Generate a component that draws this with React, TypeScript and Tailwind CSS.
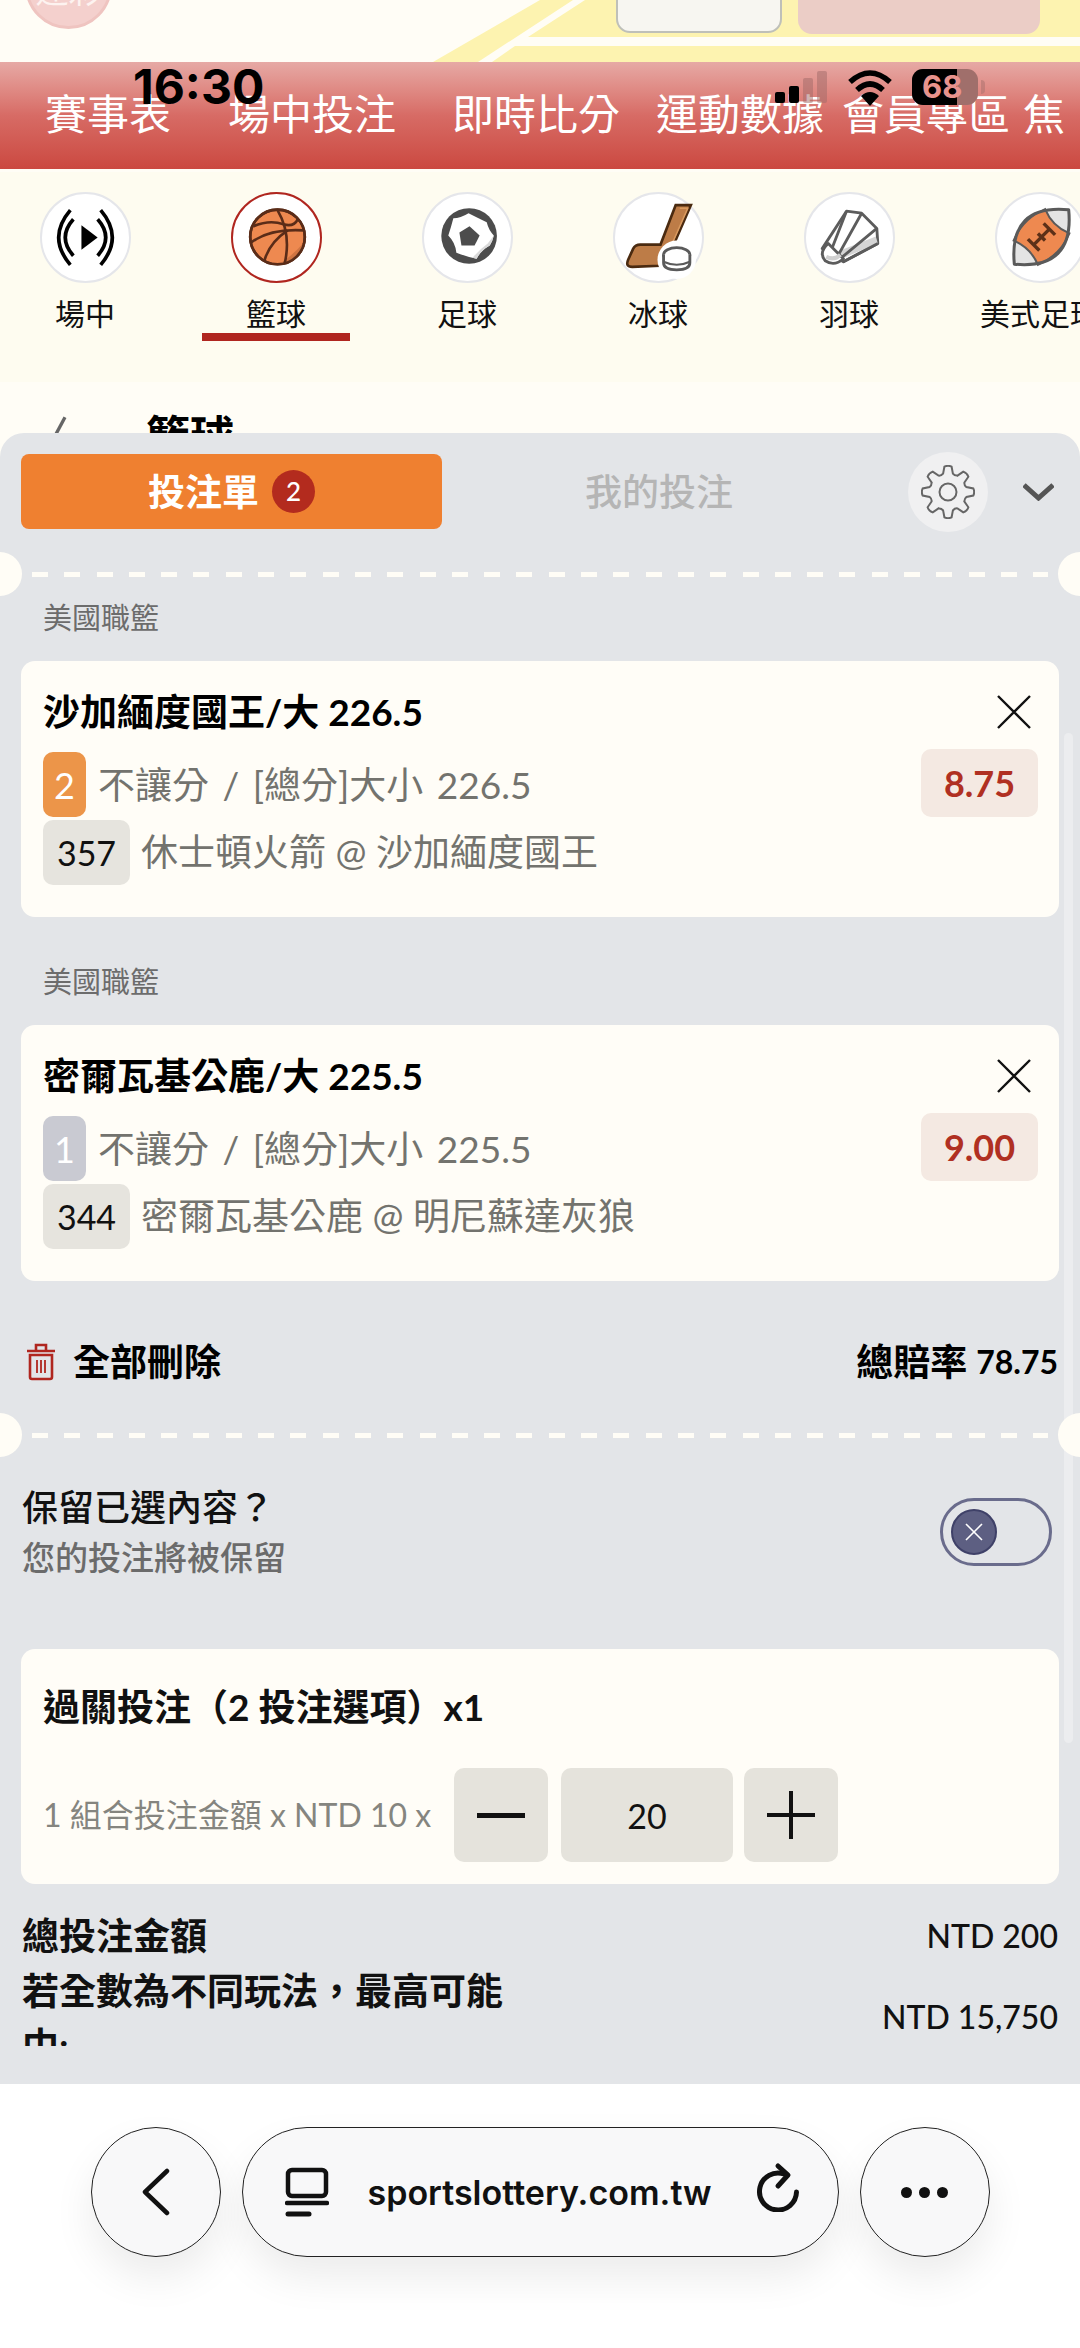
const FONT = "font-['Lato','Noto_Sans_CJK_TC',sans-serif]"

const navItems = [
    { label: "賽事表", width: "w-[183px]" },
    { label: "場中投注", width: "w-[224px]" },
    { label: "即時比分", width: "w-[204px]" },
    { label: "運動數據", width: "w-[186px]" },
    { label: "會員專區", width: "w-[181px]" },
    { label: "焦", width: "w-[57px]" },
]

// 8 tooth gear outline for the settings button
const gearPath = Array.from({ length: 8 }, (_, i) => {
    const a = (i * Math.PI) / 4 - Math.PI / 2
    const pt = (r: number, off: number) => `${(27 + r * Math.cos(a + off)).toFixed(1)} ${(27 + r * Math.sin(a + off)).toFixed(1)}`
    return `${i === 0 ? "M" : "L"}${pt(19, -0.26)} L${pt(25.5, -0.14)} Q${pt(27, 0)} ${pt(25.5, 0.14)} L${pt(19, 0.26)} Q${pt(17.5, 0.39)} ${pt(19, 0.52)}`
}).join(" ") + " Z"

const LiveIcon = () => (
    <svg viewBox="2 2 86 86" className="size-[87px]" fill="none" stroke="#000" strokeWidth="3.6">
        <path d="M41 33 L41 57 L57 45 Z" fill="#000" stroke="none" />
        <path d="M33 27 Q17 45 33 63" />
        <path d="M57 27 Q73 45 57 63" />
        <path d="M30 18 Q7 45 30 72" />
        <path d="M60 18 Q83 45 60 72" />
    </svg>
)

const BasketballIcon = () => (
    <svg viewBox="2 2 86 86" className="size-[87px]" fill="none" stroke="#5a2c18" strokeWidth="2.6">
        <circle cx="46" cy="44.5" r="27" fill="#ee8950" />
        <path d="M60 68 A27 27 0 0 0 72 50 Q62 62 48 71 Z" fill="#cf7442" stroke="none" />
        <circle cx="46" cy="44.5" r="27" />
        <path d="M22 34 Q38 27 52 32 Q62 35 66 27" />
        <path d="M20 50 Q38 36 72 38" />
        <path d="M46 18 Q60 42 53 71" />
        <path d="M33 68 Q38 50 56 38" />
    </svg>
)

const SoccerIcon = () => (
    <svg viewBox="2 2 86 86" className="size-[87px]">
        <circle cx="46.6" cy="43.5" r="27.5" fill="#4c4c4c" />
        <path d="M31 26 Q38 26 46 21 Q56 26 64 30 Q66 38 71 43 Q70 48 67 53 Q58 58 54 66 Q44 64 34 60 Q33 50 26 43 Q29 34 31 26 Z" fill="#fff" />
        <path d="M71 43 Q70 48 67 53 Q58 58 54 66 L50 65 Q58 56 65 51 Z" fill="#d9d9d9" />
        <path d="M47 34 L57 43 L52 53 L39 53 L37 40 Z" fill="#4c4c4c" />
    </svg>
)

const HockeyIcon = () => (
    <svg viewBox="2 2 86 86" className="size-[87px]">
        <path d="M62 13 L77 13 L60 52 L46 73 L19 74 Q12 74 15 67 L20 56 Q22 52 27 52 L47 52 Z" fill="#bd7c47" stroke="#4a2a10" strokeWidth="2.6" />
        <path d="M66 16 L74 16 L59 50" fill="none" stroke="#d99a5f" strokeWidth="1.5" />
        <circle cx="63" cy="67" r="19" fill="#fff" />
        <ellipse cx="63" cy="62" rx="13" ry="7" fill="#fff" stroke="#5a5a5a" strokeWidth="2.8" />
        <path d="M50 62 L50 70 Q50 77 63 77 Q76 77 76 70 L76 62" fill="#fff" stroke="#5a5a5a" strokeWidth="2.8" />
        <path d="M50 69 Q63 75 76 69" fill="none" stroke="#5a5a5a" strokeWidth="2" />
    </svg>
)

const ShuttleIcon = () => (
    <svg viewBox="2 2 86 86" className="size-[87px]" fill="none" stroke="#5c5c5c" strokeWidth="2.8" strokeLinejoin="round">
        <path d="M42 19 L57 21 L72 36 L73 51 L39 69 L18 56 Z" fill="#fff" />
        <path d="M37 66 L73 51 L71 44 L30 60 Z" fill="#d5d5d5" stroke="none" />
        <path d="M42 19 L26 60 M57 21 L33 64 M72 36 L37 65 M73 51 L39 69" />
        <path d="M24 51 Q14 60 21 68 Q30 74 39 66 Z" fill="#fff" />
        <path d="M22 64 Q30 68 36 62" stroke="#d0d0d0" strokeWidth="4" />
    </svg>
)

const FootballIcon = () => (
    <svg viewBox="2 2 86 86" className="size-[87px]">
        <g transform="translate(46 44.5) rotate(-45)">
            <path d="M-38 0 Q0 -46 38 0 Q0 46 -38 0 Z" fill="#e4e4e4" />
            <path d="M-22 -17 Q-15 0 -22 17 Q0 26 22 17 Q15 0 22 -17 Q0 -26 -22 -17 Z" fill="#ee8950" stroke="#5a5a5a" strokeWidth="2" />
            <path d="M-38 0 Q0 -46 38 0 Q0 46 -38 0 Z" fill="none" stroke="#5a5a5a" strokeWidth="3" strokeLinejoin="round" />
            <path d="M-11 0 L11 0 M-11 -8 L-11 8 M11 -8 L11 8 M0 -5 L0 5" fill="none" stroke="#5c3018" strokeWidth="3.4" />
        </g>
    </svg>
)

const sports = [
    { label: "場中", icon: <LiveIcon /> },
    { label: "籃球", icon: <BasketballIcon />, active: true },
    { label: "足球", icon: <SoccerIcon /> },
    { label: "冰球", icon: <HockeyIcon /> },
    { label: "羽球", icon: <ShuttleIcon /> },
    { label: "美式足球", icon: <FootballIcon /> },
]

const bets = [
    { title: "沙加緬度國王/大 226.5", no: "2", noColor: "bg-[#ec9549]", market: "不讓分 / [總分]大小 226.5", odds: "8.75", code: "357", game: "休士頓火箭 @ 沙加緬度國王" },
    { title: "密爾瓦基公鹿/大 225.5", no: "1", noColor: "bg-[#c9cad2]", market: "不讓分 / [總分]大小 225.5", odds: "9.00", code: "344", game: "密爾瓦基公鹿 @ 明尼蘇達灰狼" },
]

const Divider = () => (
    <div className="relative h-[44px]">
        <div className="absolute left-[-22px] top-0 size-[44px] rounded-full bg-[#fffdf6]" />
        <div className="absolute right-[-22px] top-0 size-[44px] rounded-full bg-[#fffdf6]" />
        <div className="absolute left-[32px] right-[32px] top-[20px] h-[5px] bg-[repeating-linear-gradient(90deg,#fffdf6_0,#fffdf6_16px,transparent_16px,transparent_32.3px)]" />
    </div>
)

const BetCard = ({ bet }: { bet: (typeof bets)[number] }) => (
    <div>
        <div className="ml-[43px] flex h-[42px] items-center text-[29px] text-[#6c6c6c]">美國職籃</div>
        <div className="mx-[21px] mt-[22px] h-[256px] rounded-[14px] bg-[#fffdf7] pl-[22px] pr-[21px] pt-[30px]">
            <div className="flex h-[42px] items-center justify-between">
                <span className="-mt-[2px] text-[37px] leading-none font-bold text-black">{bet.title}</span>
                <svg viewBox="0 0 34 34" className="mr-[7px] size-[34px]" fill="none" stroke="#111" strokeWidth="2.4">
                    <path d="M1 1 L33 33 M33 1 L1 33" />
                </svg>
            </div>
            <div className="mt-[16px] flex h-[68px] items-end">
                <span className={`flex h-[65px] w-[43px] items-center justify-center rounded-[10px] text-[36px] text-white ${bet.noColor}`}>{bet.no}</span>
                <span className="ml-[12px] h-[65px] flex-1 text-[37px] leading-[65px] [word-spacing:4px] whitespace-nowrap text-[#73736e]">{bet.market}</span>
                <span className="flex h-[68px] w-[117px] items-center justify-center rounded-[10px] bg-[#f4e9e2] text-[36px] font-bold text-[#b03022]">{bet.odds}</span>
            </div>
            <div className="mt-[3px] flex h-[65px] items-center">
                <span className="flex h-[65px] w-[87px] items-center justify-center rounded-[10px] bg-[#e6e4de] text-[34px] text-[#111]">{bet.code}</span>
                <span className="ml-[11px] -mt-[2px] text-[37px] whitespace-nowrap text-[#73736e]">{bet.game}</span>
            </div>
        </div>
    </div>
)

export default function App() {
    return (
        <div className={`relative h-[2348px] w-[1080px] overflow-hidden bg-[#fffdf6] ${FONT}`}>
            <div className="relative h-[62px] overflow-hidden bg-[#fffdf6]">
                <svg viewBox="0 0 1080 62" className="h-[62px] w-[1080px]" fill="#fdf3b0">
                    <path d="M433 62 L540 0 L573 0 L478 62 Z" />
                    <path d="M492 62 L515 46 L1080 46 L1080 62 Z" />
                    <path d="M528 37 L585 0 L1080 0 L1080 37 Z" />
                </svg>
                <div className="absolute left-[25px] top-[-58px] size-[87px] rounded-full border-[3px] border-[#efc4c0] bg-[#f4d0cd]">
                    <div className="mt-[29px] text-center text-[33px] leading-none whitespace-nowrap text-[#fdf3f0]">運彩</div>
                </div>
                <div className="absolute left-[616px] top-[-20px] h-[53px] w-[166px] rounded-[14px] border-[2px] border-[#bfc0b9] bg-[#f7f6f1]" />
                <div className="absolute left-[798px] top-[-20px] h-[54px] w-[242px] rounded-[14px] bg-[#ebcdc6]" />
            </div>

            <nav className="flex h-[107px] items-center overflow-hidden bg-gradient-to-b from-[#e6a9a5] via-[#d76b65] to-[#cb4840] pb-[3px] pl-[45px] whitespace-nowrap text-[42px] leading-none text-white">
                {navItems.map(item => (
                    <span key={item.label} className={`shrink-0 ${item.width}`}>{item.label}</span>
                ))}
            </nav>

            <div className="h-[3px] bg-[#fffdf6]" />

            <div className="flex h-[210px] gap-[43px] overflow-hidden bg-[#fefcf0] pl-[11px] pt-[20px]">
                {sports.map(sport => (
                    <div key={sport.label} className="flex w-[148px] shrink-0 flex-col items-center">
                        <div className={`flex size-[91px] items-center justify-center rounded-full bg-white border-[2px] ${sport.active ? "border-[#b0261f]" : "border-[#e5e6ea]"}`}>
                            {sport.icon}
                        </div>
                        <span className="mt-[10px] h-[40px] text-[30px] leading-[40px] whitespace-nowrap text-[#111]">{sport.label}</span>
                        {sport.active && <div className="h-[8px] w-[148px] bg-[#b0261f]" />}
                    </div>
                ))}
            </div>

            <div className="flex h-[51px] items-start overflow-hidden pl-[50px] pt-[32px]">
                <svg viewBox="0 0 24 60" className="h-[50px] w-[20px]" fill="none" stroke="#666" strokeWidth="4">
                    <path d="M18 4 L4 30" />
                </svg>
                <span className="ml-[76px] text-[44px] leading-none font-bold text-black">籃球</span>
            </div>

            <section className="relative h-[1651px] overflow-hidden rounded-t-[24px] bg-[#e3e5e8]">
                <div className="absolute right-[7px] top-[300px] h-[1010px] w-[9px] rounded-full bg-[#ecedef]" />

                <div className="flex h-[119px] items-start pt-[21px]">
                    <div className="ml-[21px] flex h-[75px] w-[421px] shrink-0 items-center justify-center gap-[13px] rounded-[8px] bg-[#ef8030] text-[37px] font-bold text-white">
                        投注單
                        <span className="flex size-[43px] items-center justify-center rounded-full bg-[#b32b1e] text-[26px] font-medium">2</span>
                    </div>
                    <div className="ml-[143px] flex h-[75px] w-[323px] shrink-0 items-center text-[37px] font-medium whitespace-nowrap text-[#b5b5b5]">我的投注</div>
                    <div className="-mt-[2px] flex size-[80px] shrink-0 items-center justify-center rounded-full bg-[#f0f0f1]">
                        <svg viewBox="0 0 54 54" className="size-[54px]" fill="none" stroke="#666" strokeWidth="2">
                            <path d={gearPath} />
                            <circle cx="27" cy="27" r="8.5" />
                        </svg>
                    </div>
                    <svg viewBox="0 0 31 18" className="ml-[35px] mt-[29px] h-[18px] w-[31px] shrink-0" fill="none" stroke="#555" strokeWidth="5">
                        <path d="M1 2 L15.5 15 L30 2" />
                    </svg>
                </div>

                <Divider />

                <div className="pt-[1px]">
                    <BetCard bet={bets[0]} />
                </div>
                <div className="pt-[44px]">
                    <BetCard bet={bets[1]} />
                </div>

                <div className="mt-[56px] flex h-[50px] items-center justify-between pl-[26px] pr-[22px]">
                    <div className="flex items-center">
                        <svg viewBox="0 0 30 38" className="h-[38px] w-[30px]" fill="none" stroke="#b0261f" strokeWidth="2.6">
                            <path d="M1 8 L29 8 M10 8 L10 2 L20 2 L20 8" />
                            <path d="M4 12 L4 34 Q4 36 6 36 L24 36 Q26 36 26 34 L26 12 Z" />
                            <path d="M11 17 L11 30 M15 17 L15 30 M19 17 L19 30" strokeWidth="1.8" />
                        </svg>
                        <span className="ml-[17px] text-[37px] font-bold text-black">全部刪除</span>
                    </div>
                    <div className="flex items-center text-black">
                        <span className="text-[37px] font-bold">總賠率</span>
                        <span className="ml-[9px] text-[32px] font-bold">78.75</span>
                    </div>
                </div>

                <div className="mt-[26px]">
                    <Divider />
                </div>

                <div className="mt-[25px] flex h-[107px] items-start justify-between pl-[22px] pr-[28px]">
                    <div>
                        <div className="h-[50px] text-[36px] leading-[50px] font-medium text-[#111]">保留已選內容？</div>
                        <div className="h-[48px] text-[33px] leading-[50px] font-medium text-[#6b6b6b]">您的投注將被保留</div>
                    </div>
                    <div className="mt-[16px] flex h-[68px] w-[112px] items-center rounded-full border-[3px] border-[#6a6c8c] pl-[8px]">
                        <div className="flex size-[46px] items-center justify-center rounded-full border-[2px] border-[#3f4168] bg-[#5d5f82]">
                            <svg viewBox="0 0 20 20" className="size-[20px]" fill="none" stroke="#fff" strokeWidth="1.6">
                                <path d="M2 2 L18 18 M18 2 L2 18" />
                            </svg>
                        </div>
                    </div>
                </div>

                <div className="mx-[21px] mt-[60px] h-[235px] rounded-[14px] bg-[#fffdf7] pl-[22px] pt-[37px]">
                    <div className="h-[42px] text-[37px] leading-[42px] font-bold text-[#111]">過關投注（2 投注選項）x1</div>
                    <div className="mt-[40px] flex h-[94px] items-center">
                        <span className="w-[411px] shrink-0 text-[32px] whitespace-nowrap text-[#85857f]">1 組合投注金額 x NTD 10 x</span>
                        <div className="flex size-[94px] items-center justify-center rounded-[10px] bg-[#e5e3dc]">
                            <div className="h-[5px] w-[48px] bg-[#111]" />
                        </div>
                        <div className="ml-[13px] flex h-[94px] w-[172px] items-center justify-center rounded-[10px] bg-[#e5e3dc] text-[34px] text-[#111]">20</div>
                        <div className="ml-[11px] flex size-[94px] items-center justify-center rounded-[10px] bg-[#e5e3dc]">
                            <svg viewBox="0 0 48 48" className="size-[48px]" fill="none" stroke="#111" strokeWidth="4">
                                <path d="M0 24 L48 24 M24 0 L24 48" />
                            </svg>
                        </div>
                    </div>
                </div>

                <div className="relative h-[165px] overflow-hidden pl-[22px] pr-[22px] pt-[27px]">
                    <div className="flex h-[50px] items-center justify-between">
                        <span className="text-[37px] font-bold text-[#111]">總投注金額</span>
                        <span className="text-[32px] font-medium text-[#111]">NTD 200</span>
                    </div>
                    <div className="flex h-[112px] justify-between">
                        <div className="h-[85px] w-[510px] overflow-hidden pt-[2px] text-[37px] leading-[55px] font-bold text-[#111]">若全數為不同玩法，最高可能中:</div>
                        <span className="pt-[32px] text-[32px] font-medium text-[#111]">NTD 15,750</span>
                    </div>
                </div>
            </section>

            <div className="flex h-[264px] items-start justify-center gap-[21px] bg-white pt-[43px] text-[#111]">
                <div className="flex size-[130px] items-center justify-center rounded-full border-[1.5px] border-[#222] bg-[#f8f8f9] shadow-[0_20px_40px_rgba(0,0,0,0.08)]">
                    <svg viewBox="0 0 32 48" className="h-[48px] w-[32px]" fill="none" stroke="#111" strokeWidth="4.5" strokeLinecap="round" strokeLinejoin="round">
                        <path d="M27 3 L5 24 L27 45" />
                    </svg>
                </div>
                <div className="flex h-[130px] w-[597px] items-center rounded-[65px] border-[1.5px] border-[#222] bg-[#f8f8f9] pl-[42px] pr-[36px] shadow-[0_20px_40px_rgba(0,0,0,0.08)]">
                    <svg viewBox="0 0 44 50" className="h-[50px] w-[44px]" fill="none" stroke="#111" strokeWidth="4.5" strokeLinecap="round">
                        <rect x="3" y="3" width="38" height="26" rx="4" />
                        <path d="M2 36 L42 36" />
                        <path d="M3 47 L24 47" strokeWidth="5" />
                    </svg>
                    <span className="ml-[39px] flex-1 font-['Inter',sans-serif] text-[34px] font-semibold whitespace-nowrap">sportslottery.com.tw</span>
                    <svg viewBox="36 12 46 50" className="-mt-[10px] h-[50px] w-[46px]" fill="none" stroke="#111" strokeWidth="5" strokeLinecap="round" strokeLinejoin="round">
                        <path d="M64 24 A18.5 18.5 0 1 0 76.5 42" />
                        <path d="M58 16 L68 25 L58 36" />
                    </svg>
                </div>
                <div className="flex size-[130px] items-center justify-center gap-[7px] rounded-full border-[1.5px] border-[#222] bg-[#f8f8f9] shadow-[0_20px_40px_rgba(0,0,0,0.08)]">
                    <div className="size-[11px] rounded-full bg-[#111]" />
                    <div className="size-[11px] rounded-full bg-[#111]" />
                    <div className="size-[11px] rounded-full bg-[#111]" />
                </div>
            </div>

            <div className="absolute left-0 top-0 h-[120px] w-full text-black">
                <span className="absolute left-[133px] top-[60px] font-['Inter',sans-serif] text-[48px] leading-[54px] font-bold">16:30</span>
                <div className="absolute left-[775px] top-[71px] flex h-[32px] items-end gap-[4.5px]">
                    <div className="h-[11px] w-[9.5px] rounded-[2px] bg-black" />
                    <div className="h-[17px] w-[9.5px] rounded-[2px] bg-black" />
                    <div className="h-[25px] w-[9.5px] rounded-[2px] bg-[#a06a68]/50" />
                    <div className="h-[32px] w-[9.5px] rounded-[2px] bg-[#a06a68]/50" />
                </div>
                <svg viewBox="0 0 46 36" className="absolute left-[847px] top-[70px] h-[36px] w-[46px]" fill="none" stroke="#000" strokeWidth="5.5">
                    <path d="M3 12 Q23 -6 43 12" />
                    <path d="M10 20 Q23 8 36 20" />
                    <path d="M23 36 L14 26 Q23 18 32 26 Z" fill="#000" stroke="none" />
                </svg>
                <div className="absolute left-[912px] top-[69px] h-[36px] w-[66px] overflow-hidden rounded-[11px] bg-[#a06f6b]">
                    <div className="h-full w-[45px] bg-black" />
                    <span className="absolute left-[10px] top-0 font-['Inter',sans-serif] text-[31px] leading-[36px] font-bold text-[#e8938d]">68</span>
                </div>
                <div className="absolute left-[981px] top-[80px] h-[14px] w-[4px] rounded-r-full bg-[#a8706c]/50" />
            </div>
        </div>
    )
}
